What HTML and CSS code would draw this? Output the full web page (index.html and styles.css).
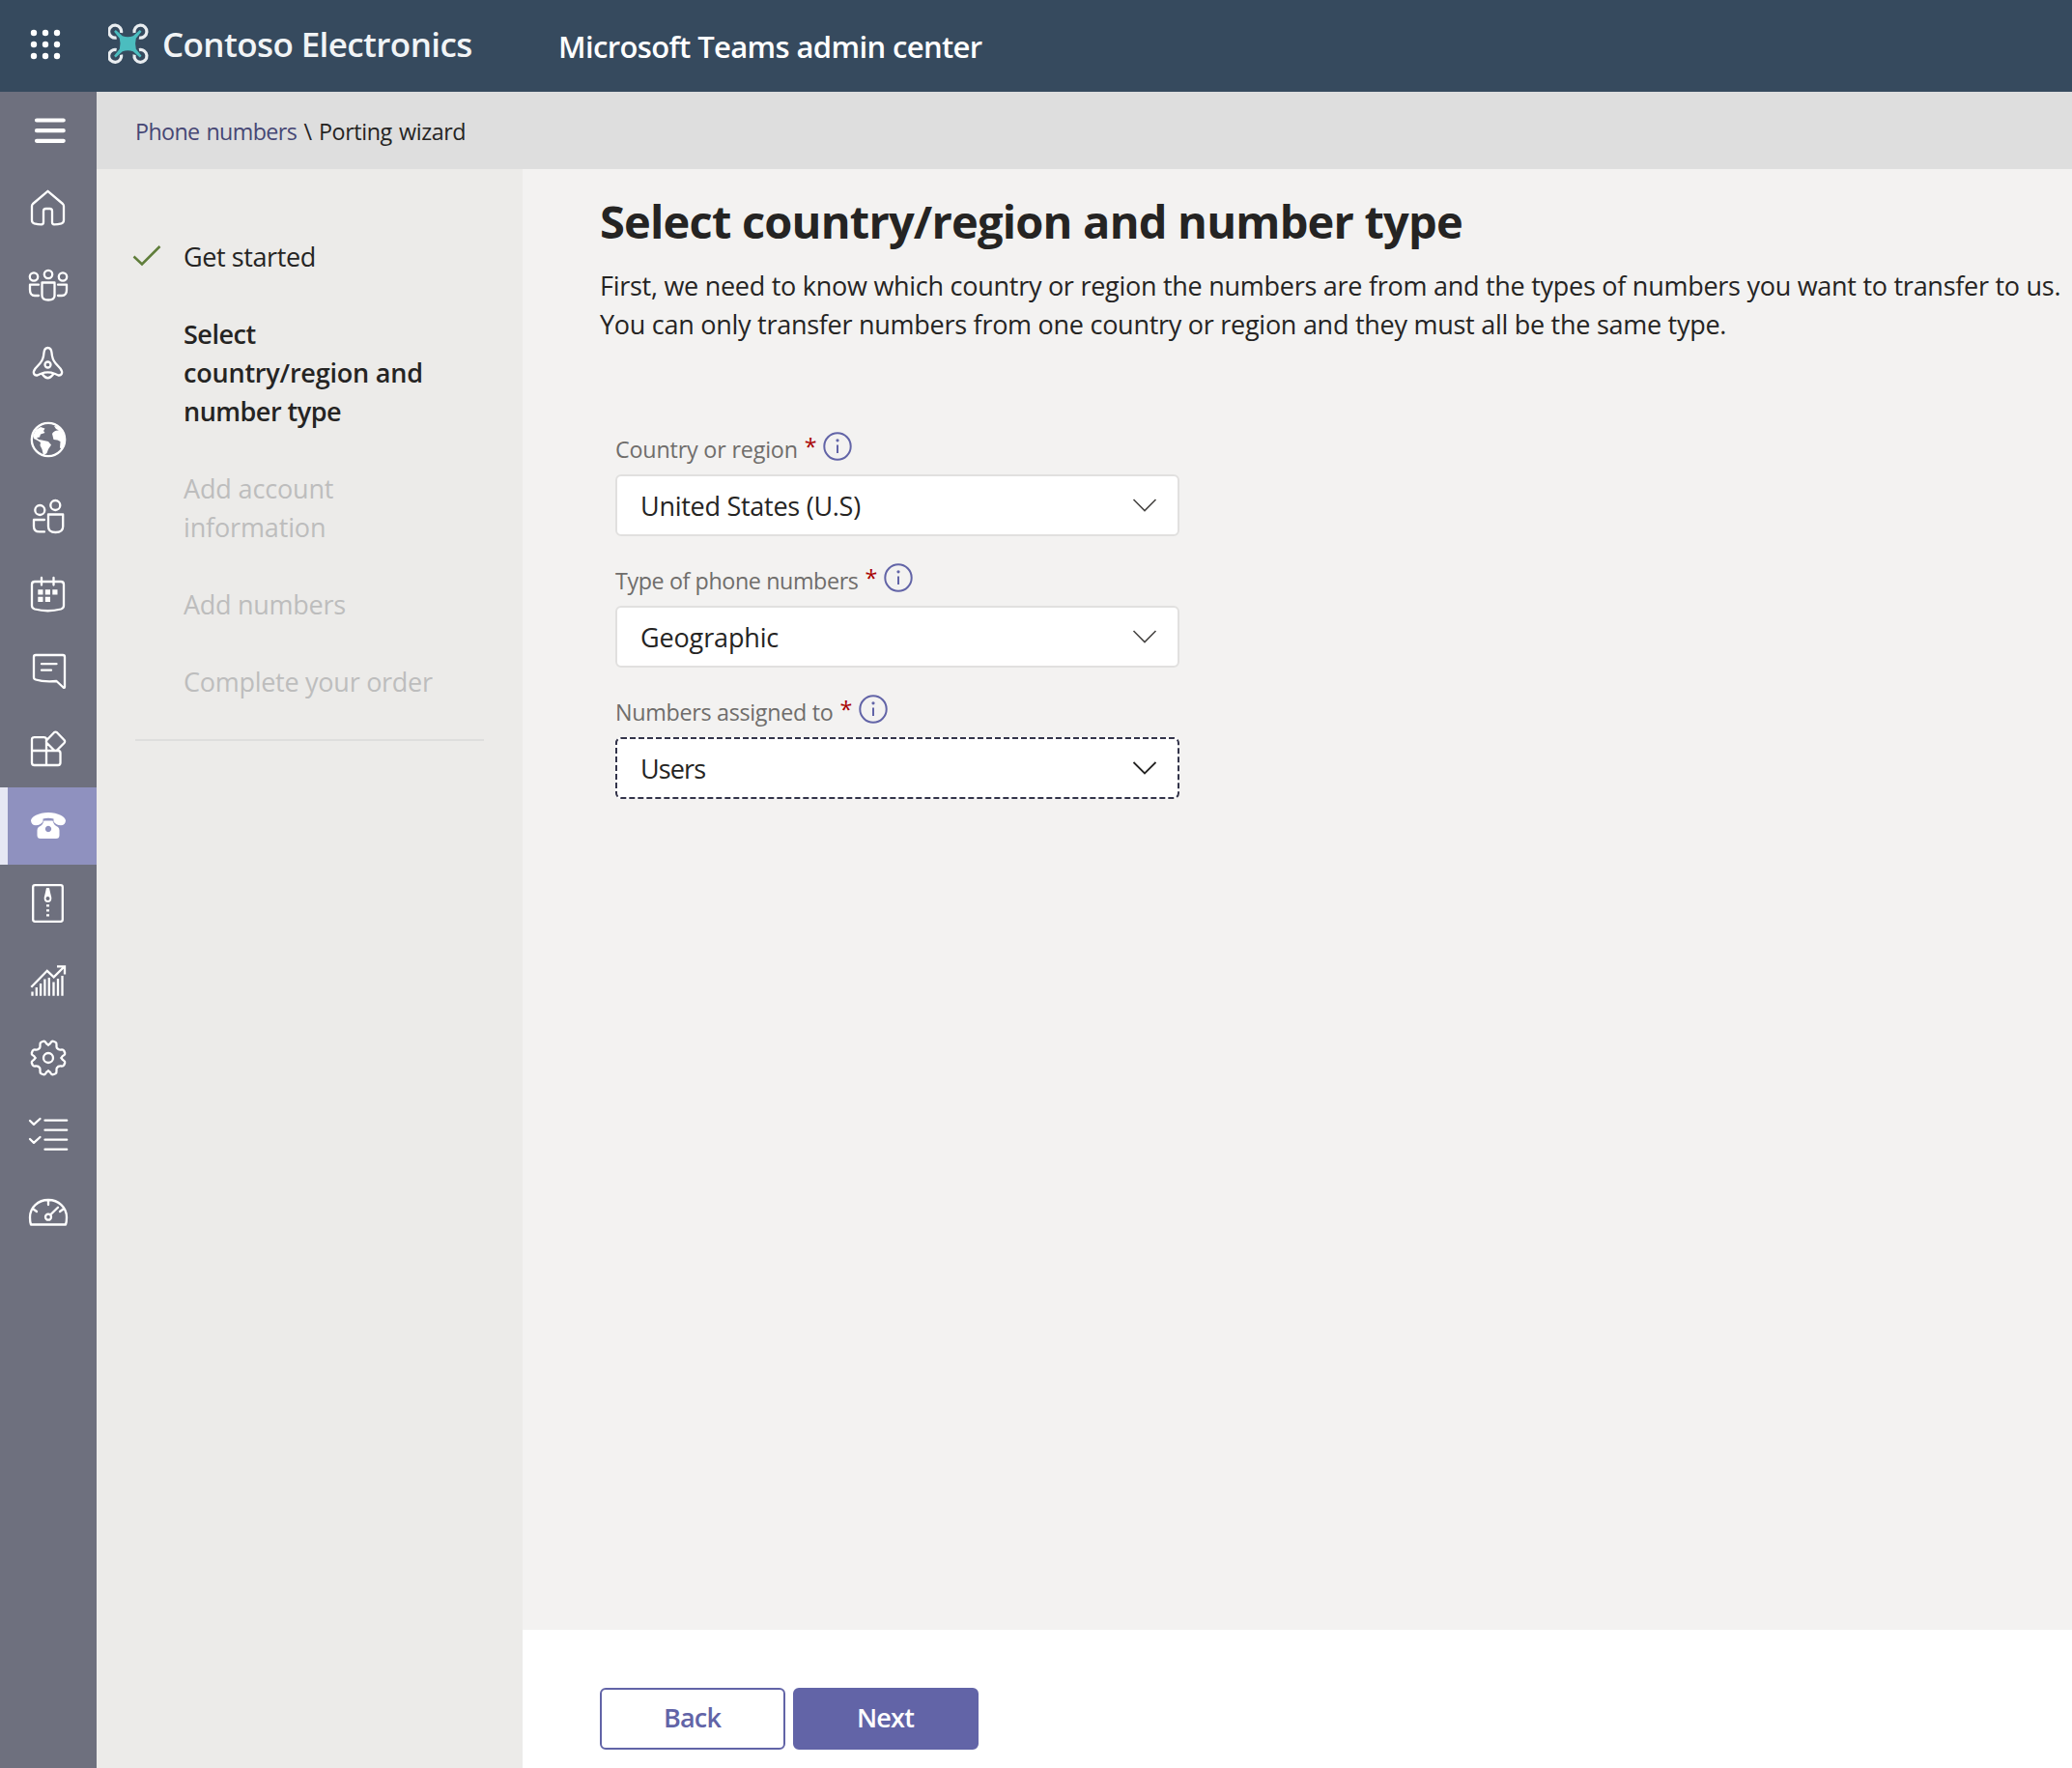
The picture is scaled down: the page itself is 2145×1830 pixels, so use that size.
FILE: index.html
```html
<!DOCTYPE html>
<html lang="en">
<head>
<meta charset="utf-8">
<title>Porting wizard - Microsoft Teams admin center</title>
<link rel="stylesheet" href="styles.css">
</head>
<body>
<header class="topbar">
  <svg class="waffle" viewBox="0 0 100 95"><g fill="#fff"><circle cx="35" cy="34" r="3.2"/><circle cx="47" cy="34" r="3.2"/><circle cx="59" cy="34" r="3.2"/><circle cx="35" cy="46" r="3.2"/><circle cx="47" cy="46" r="3.2"/><circle cx="59" cy="46" r="3.2"/><circle cx="35" cy="58" r="3.2"/><circle cx="47" cy="58" r="3.2"/><circle cx="59" cy="58" r="3.2"/></g></svg>
  <svg class="logo" viewBox="112 20 46 50"><g transform="translate(132.300 45.300)"><g fill="none" stroke="#e9edf0" stroke-width="3.200"><path id="rotor" d="M-6.800-11.300A6.500 6.500 0 1 0-11.700-6.300"/><use href="#rotor" transform="scale(-1 1)"/><use href="#rotor" transform="scale(1 -1)"/><use href="#rotor" transform="scale(-1 -1)"/></g><path fill="#4bbdbf" d="M-14.200-12.500L-12.500-14.200L-5.500-8Q0-6 5.500-8L12.500-14.200L14.200-12.500L8.500-5.500Q7 0 8.500 5.500L14.200 12.500L12.500 14.200L5.500 8Q0 6-5.500 8L-12.500 14.200L-14.200 12.500L-8.500 5.500Q-7 0-8.500-5.500Z"/></g></svg>
  <span class="company">Contoso Electronics</span>
  <span class="product">Microsoft Teams admin center</span>
</header>
<div class="shell">
  <nav class="rail">
    <a class="rail-item"><svg viewBox="0 0 100 80"><path d="M38 29.500H65.700M38 40.200H65.700M38 50.800H65.700"/></svg></a>
    <a class="rail-item"><svg viewBox="0 0 100 80"><path d="M49.500 22.800L34 36Q33 37 33 38.500V53Q33 55.500 35.500 56.300Q39 57.300 43 57.300Q45 57.300 45 55V43.500Q45 41 47.500 41H51.500Q54 41 54 43.500V55Q54 57.300 56 57.300Q60 57.300 63.500 56.300Q66 55.500 66 53V38.500Q66 37 65 36Z"/></svg></a>
    <a class="rail-item"><svg viewBox="0 0 100 80"><circle cx="35" cy="31.500" r="4.200"/><circle cx="50" cy="29" r="4.200"/><circle cx="65" cy="31.500" r="4.200"/><path d="M43.500 37.500H56.500V51Q56.500 55.500 50 55.500Q43.500 55.500 43.500 51ZM40 39.700H31V45Q31 51 36 51H40M60 39.700H69V45Q69 51 64 51H60"/></svg></a>
    <a class="rail-item"><svg viewBox="0 0 100 80"><path d="M49.500 25Q53 25 53.500 30Q54 37 57.500 41L62.500 46.500Q65 50 63.800 52Q62.500 54 60 53.300L56.500 51.800Q49.500 49 42.500 51.800L39 53.300Q36.500 54 35.200 52Q34 50 36.500 46.500L41.500 41Q45 37 45.500 30Q46 25 49.500 25ZM44 52.500Q49.500 60 55 52.500"/><circle cx="49.500" cy="42.500" r="3"/></svg></a>
    <a class="rail-item"><svg viewBox="0 0 100 80"><circle cx="50" cy="40" r="17.200"/><path fill="#fff" stroke="none" d="M34 36L37 30L42 27L46.500 28.500L45 31L46.500 33L42 34.500L41 37.500L38 38L40 40L43 40.500L50 42L53 45.500L50 50L48.500 54L45 56.500L43.500 50L41.500 46L42 43L39 41L35 39ZM54 34Q56 30 61 30.500L58 29L56 26L61 26.500L65.500 34L67 40L64.500 50L62 48.500L62.500 42L59.500 40.500L55.500 40Z"/></svg></a>
    <a class="rail-item"><svg viewBox="0 0 100 80"><circle cx="41.300" cy="33" r="5"/><circle cx="57.300" cy="28" r="5"/><path d="M50 37.500H65.200V50Q65.200 56 57.500 56Q50 56 50 50ZM46 43H35V50Q35 55.400 41 55.400H46"/></svg></a>
    <a class="rail-item"><svg viewBox="0 0 100 80"><path d="M36 27H63Q66 27 66 30V52Q66 54.500 63 55.500Q49.500 59 36 55.500Q33 54.500 33 52V30Q33 27 36 27ZM43 23V30.500M55.500 23V30.500"/><path fill="#fff" stroke="none" d="M39.300 35.300h5.200v5.200h-5.200zM46.800 35.300h5.200v5.200h-5.200zM54.300 35.300h5.200v5.200h-5.200zM39.300 42.800h5.200v5.200h-5.200zM46.800 42.800h5.200v5.200h-5.200z"/></svg></a>
    <a class="rail-item"><svg viewBox="0 0 100 80"><path d="M37 23H65Q67 23 67 25V56Q67 57.500 65.500 56.500L58.500 50Q45 51 37 48.500Q35 48 35 46V25Q35 23 37 23ZM43 32.200H58.500M43 38.700H53"/></svg></a>
    <a class="rail-item"><svg viewBox="0 0 100 80"><path d="M48 42V30.500Q48 28.200 45.500 28.200H35.500Q33 28.200 33 30.500V54.500Q33 57 35.500 57H60Q62.500 57 62.500 54.500V44.500Q62.500 42 60 42ZM33 42H48V57M56 23.200Q57.500 22 59 23.200L66.500 31Q67.700 32.500 66.500 34L59 41.500Q57.500 42.700 56 41.500L48.500 34Q47.300 32.500 48.500 31Z"/></svg></a>
    <a class="rail-item active"><svg viewBox="0 0 100 80"><path fill="#fff" stroke="none" fill-rule="evenodd" d="M50 26C60 26 68 30.500 68 34.500Q67.500 39 63 39.300Q58 39 55.500 35.500V32.500Q50 31 44.500 32.500V35.500Q42 39 37 39.300Q32.500 39 32 34.500C32 30.500 40 26 50 26ZM45.500 34.500H54.500Q56 39.500 60 41Q61.500 42 61.500 44.500V49.500Q61.500 53 58 53H42Q38.500 53 38.500 49.500V44.500Q38.500 42 40 41Q44 39.500 45.500 34.500ZM50 39.800a3.200 3.200 0 1 0 .01 0z"/></svg></a>
    <a class="rail-item"><svg viewBox="0 0 100 80"><rect x="34.200" y="21.200" width="30.600" height="37.600" rx="2"/><path fill="#fff" stroke="none" fill-rule="evenodd" d="M48 24H51Q52 29 53.300 34Q53.700 39 49.500 39Q45.300 39 45.700 34Q47 29 48 24ZM49.500 33a2 2 0 1 0 .01 0z"/><path fill="#fff" stroke="none" d="M48 41.200h3v2.200h-3zM48 46.200h3v2.200h-3zM48 51.200h3v2.200h-3z"/></svg></a>
    <a class="rail-item"><svg viewBox="0 0 100 80"><g stroke-linecap="butt" stroke-linejoin="miter"><path d="M32.300 46.800L48.800 29.800L55.700 36.300L66.500 25.500M59 25.300H67V33.500"/><path d="M33.500 55.700V51.500M37.800 55.700V47M42.100 55.700V43M46.400 55.700V38.500M50.800 55.700V37M55.500 55.700V41.500M60 55.700V38M64.500 55.700V35"/></g></svg></a>
    <a class="rail-item"><svg viewBox="0 0 100 80"><g transform="translate(50 40)"><path id="cog" d="M0-13.500Q2-14.500 2.700-16Q3.500-17.500 5-17.200L7.500-16.200Q8.700-15.500 8.500-13.500Q8.300-10 9.700-9.700Q10-8.300 13.500-8.500Q15.500-8.700 16.200-7.500L17.200-5Q17.500-3.500 16-2.700Q14.500-2 13.500 0"/><use href="#cog" transform="rotate(90)"/><use href="#cog" transform="rotate(180)"/><use href="#cog" transform="rotate(270)"/><circle r="5"/></g></svg></a>
    <a class="rail-item"><svg viewBox="0 0 100 80"><path d="M46.500 24.700H69.200M46.500 34.700H69.200M46.500 44.700H69.200M46.500 54.700H69.200M31 25L35 28.800L41.500 23M31 44L35 47.800L41.500 42"/></svg></a>
    <a class="rail-item"><svg viewBox="0 0 100 80"><path d="M32 52.500Q31 50 31 45C31 34.500 39.500 27 50 27S69 34.500 69 45Q69 50 68 52.500ZM50 28V32M34.500 36.500L38 39M65.500 36.500L62 39M52.300 42.300L60 34.700"/><circle cx="50" cy="44.700" r="3"/></svg></a>
  </nav>
  <div class="page">
    <div class="breadcrumb"><a class="crumb-link">Phone numbers</a> \ <span class="crumb">Porting wizard</span></div>
    <div class="wizard">
      <aside class="steps">
        <ol class="step-list">
          <li class="step done"><svg class="check" viewBox="0 0 30 24"><path d="M1.500 12.500L10 20.500L28.500 2" fill="none" stroke="#5f7d3a" stroke-width="2.500"/></svg>Get started</li>
          <li class="step current">Select<br><span class="wide">country/region and</span><br>number type</li>
          <li class="step account">Add account<br>information</li>
          <li class="step">Add numbers</li>
          <li class="step">Complete your order</li>
        </ol>
      </aside>
      <main class="content">
        <section class="form-area">
          <h1 class="title">Select country/region and number type</h1>
          <p class="intro">First, we need to know which country or region the numbers are from and the types of numbers you want to transfer to us.<br>You can only transfer numbers from one country or region and they must all be the same type.</p>
          <div class="fields">
            <div class="field">
              <div class="label"><span class="label-text label-country">Country or region</span><span class="req">*</span><svg class="info" viewBox="0 0 30 30"><circle cx="15" cy="15" r="13.700"/><path d="M15 13.500V22"/><circle class="dot" cx="15" cy="8.800" r="1.600"/></svg></div>
              <div class="select"><span>United States (U.S)</span><svg class="chev" viewBox="0 0 26 16"><path d="M1.500 2L13 13.500L24.500 2"/></svg></div>
            </div>
            <div class="field">
              <div class="label"><span class="label-text">Type of phone numbers</span><span class="req">*</span><svg class="info" viewBox="0 0 30 30"><circle cx="15" cy="15" r="13.700"/><path d="M15 13.500V22"/><circle class="dot" cx="15" cy="8.800" r="1.600"/></svg></div>
              <div class="select"><span class="geographic">Geographic</span><svg class="chev" viewBox="0 0 26 16"><path d="M1.500 2L13 13.500L24.500 2"/></svg></div>
            </div>
            <div class="field">
              <div class="label"><span class="label-text label-assigned">Numbers assigned to</span><span class="req">*</span><svg class="info" viewBox="0 0 30 30"><circle cx="15" cy="15" r="13.700"/><path d="M15 13.500V22"/><circle class="dot" cx="15" cy="8.800" r="1.600"/></svg></div>
              <div class="select focused"><svg class="focus-ring" viewBox="0 0 584 64"><rect x="1" y="1" width="582" height="62" rx="5"/></svg><span class="users">Users</span><svg class="chev" viewBox="0 0 26 16"><path d="M1.500 2L13 13.500L24.500 2"/></svg></div>
            </div>
          </div>
        </section>
        <footer class="actions">
          <button class="btn">Back</button>
          <button class="btn primary">Next</button>
        </footer>
      </main>
    </div>
  </div>
</div>
</body>
</html>
```
FILE: styles.css
```css
* { box-sizing: border-box; }
body {
  margin: 0;
  height: 1830px;
  display: flex;
  flex-direction: column;
  overflow: hidden;
  font-family: "Open Sans", "Noto Sans", sans-serif;
  font-size: 27px;
  line-height: 40px;
  letter-spacing: -0.27px;
  color: #252423;
}
svg { display: block; flex: none; }
.topbar {
  height: 95px;
  flex: none;
  display: flex;
  align-items: center;
  background: #364a5e;
  color: #fff;
  font-weight: 600;
  white-space: nowrap;
}
.waffle { width: 100px; height: 95px; }
.logo { width: 46px; height: 50px; margin-left: 12px; margin-bottom: 5px; }
.company { width: 410px; margin-left: 10px; font-size: 35px; letter-spacing: -0.6px; margin-top: -3px; color: #f1f4f6; }
.product { font-size: 31px; letter-spacing: -0.63px; }
.shell { flex: 1; display: flex; min-height: 0; }
.rail { width: 100px; flex: none; background: #6e707e; }
.rail-item { display: block; height: 80px; }
.rail-item svg {
  width: 100px;
  height: 80px;
  fill: none;
  stroke: #fff;
  stroke-width: 2.3px;
  stroke-linecap: round;
  stroke-linejoin: round;
}
.rail-item:first-child svg { stroke-width: 4.2px; }
.rail-item.active { background: #8f91bf; box-shadow: inset 8px 0 #e6e7f4; }
.page { flex: 1; display: flex; flex-direction: column; min-width: 0; }
.breadcrumb {
  height: 80px;
  flex: none;
  padding: 21px 0 0 40px;
  background: #dedede;
  font-size: 23.3px;
  line-height: 40px;
  word-spacing: 1.5px;
}
.crumb-link { color: #464775; letter-spacing: -0.63px; }
.crumb { letter-spacing: -0.4px; }
.wizard { flex: 1; display: flex; min-height: 0; }
.steps { width: 441px; flex: none; padding: 0 40px; background: #ecebe9; }
.step-list {
  margin: 0;
  padding: 71px 0 39px 50px;
  list-style: none;
  display: flex;
  flex-direction: column;
  gap: 40px;
  border-bottom: 2px solid #dededd;
}
.step { position: relative; color: #bdbdbd; white-space: nowrap; }
.step.done { color: #252423; letter-spacing: -0.4px; }
.step.current { color: #252423; font-weight: 600; letter-spacing: -0.5px; }
.step .wide { letter-spacing: -0.2px; }
.step.account { letter-spacing: -0.15px; }
.check { position: absolute; left: -53px; top: 7px; width: 30px; height: 24px; }
.content { flex: 1; display: flex; flex-direction: column; min-width: 0; background: #f3f2f1; }
.form-area { flex: 1; padding: 22px 0 0 80px; }
.title { margin: 0; font-size: 47px; line-height: 64px; font-weight: 700; letter-spacing: -0.8px; white-space: nowrap; }
.intro { margin: 15px 0 0; white-space: nowrap; }
.fields { width: 600px; padding: 85px 0 0 16px; display: flex; flex-direction: column; gap: 22px; }
.label { height: 50px; display: flex; align-items: flex-start; color: #6f6d6b; font-size: 23.3px; }
.label-text { padding-top: 4px; letter-spacing: -0.4px; }
.label-country { letter-spacing: -0.18px; }
.label-assigned { letter-spacing: -0.3px; }
.req { color: #a80000; padding: 1px 0 0 7px; }
.info { width: 30px; height: 30px; margin: 6px 0 0 7px; fill: none; stroke: #6264a7; stroke-width: 2px; }
.info .dot { fill: #6264a7; stroke: none; }
.select {
  position: relative;
  height: 64px;
  padding: 0 21px 0 24px;
  display: flex;
  align-items: center;
  justify-content: space-between;
  border: 2px solid #e1e0df;
  border-radius: 6px;
  background: #fff;
}
.select span { padding-top: 2px; }
.geographic { letter-spacing: -0.14px; }
.users { letter-spacing: -0.9px; }
.select.focused { border-color: transparent; background-clip: border-box; }
.focus-ring { position: absolute; left: -2px; top: -2px; width: 584px; height: 64px; fill: none; stroke: #33344a; stroke-width: 2px; stroke-dasharray: 6 3; }
.chev { width: 26px; height: 16px; fill: none; stroke: #484644; stroke-width: 1.6px; }
.focused .chev { stroke: #252423; stroke-width: 1.8px; }
.actions { height: 143px; flex: none; padding: 60px 0 0 80px; display: flex; gap: 8px; align-items: flex-start; background: #fff; }
.btn {
  width: 192px;
  height: 64px;
  padding: 0 1px 2px 0;
  border: 2px solid #6264a7;
  border-radius: 6px;
  background: #fff;
  color: #6264a7;
  font: 600 27px/40px "Open Sans", "Noto Sans", sans-serif;
  letter-spacing: -0.8px;
}
.btn.primary { background: #6264a7; color: #fff; }
```
